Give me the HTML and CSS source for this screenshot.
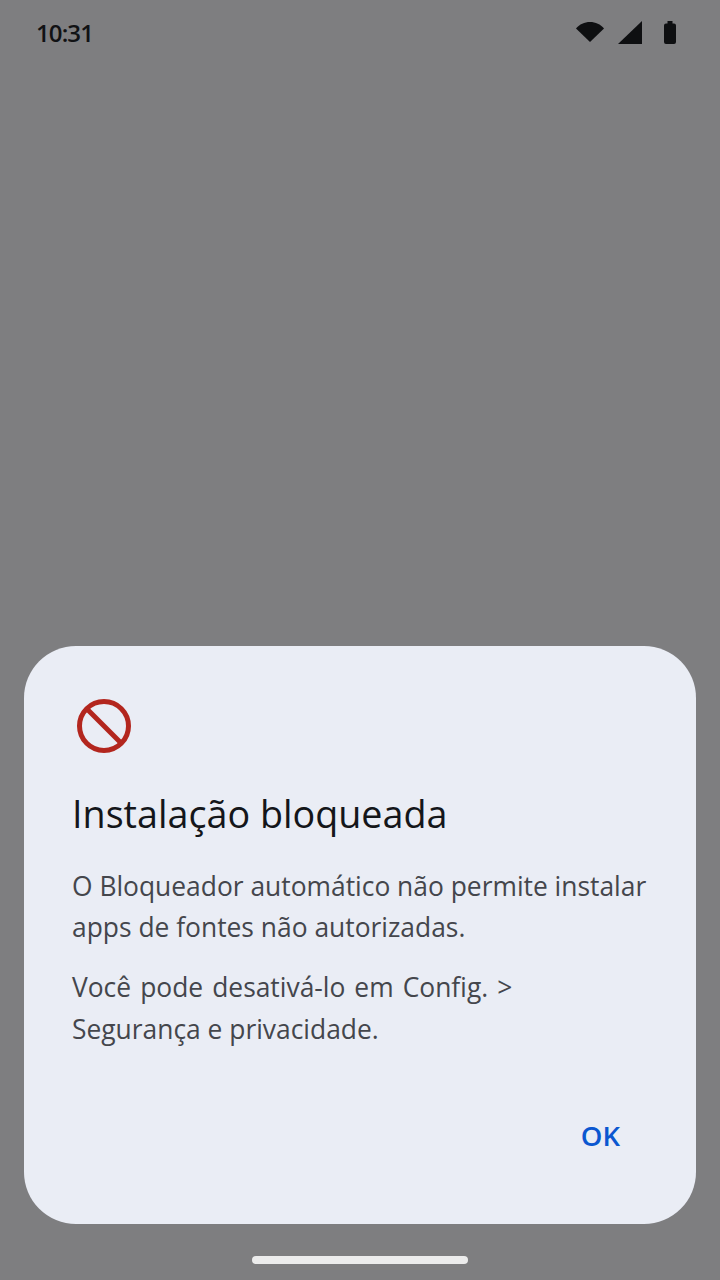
FILE: index.html
```html
<!DOCTYPE html>
<html lang="pt-BR">
<head>
    <meta charset="utf-8">
    <title>Instalação bloqueada</title>
    <link rel="stylesheet" href="styles.css">
</head>
<body>
    <header class="status-bar">
        <span class="clock">10:31</span>
        <div class="status-icons">
            <svg class="icon-wifi" width="28" height="20" viewBox="0 0 28 20">
                <path d="M0 6.500C3.500 2.200 8.500 0 14 0S24.500 2.200 28 6.500L14 20Z" fill="#0e0f11"/>
            </svg>
            <svg class="icon-signal" width="24" height="23" viewBox="0 0 24 23">
                <path d="M24 0V23H0Z" fill="#0e0f11"/>
            </svg>
            <svg class="icon-battery" width="12" height="23" viewBox="0 0 12 23">
                <path d="M3.500 0H8.500V2.500H10Q12 2.500 12 4.500V21Q12 23 10 23H2Q0 23 0 21V4.500Q0 2.500 2 2.500H3.500Z" fill="#0e0f11"/>
            </svg>
        </div>
    </header>

    <main class="screen">
        <section class="dialog">
            <svg class="dialog-icon" width="56" height="56" viewBox="0 0 56 56">
                <circle cx="28" cy="28" r="24.500" fill="none" stroke="#b3261e" stroke-width="5"/>
                <path d="M11 11L45 45" stroke="#b3261e" stroke-width="5"/>
            </svg>
            <h2 class="dialog-title">Instalação bloqueada</h2>
            <p class="dialog-text">O Bloqueador automático não permite instalar<br>apps de fontes não autorizadas.</p>
            <p class="dialog-text dialog-text-tall"><span class="wide-words">Você pode desativá-lo em Config. &gt;</span><br>Segurança e privacidade.</p>
            <div class="dialog-actions">
                <button class="ok-button">OK</button>
            </div>
        </section>
    </main>

    <footer class="nav-bar">
        <div class="home-pill"></div>
    </footer>
</body>
</html>
```

FILE: styles.css
```css
html, body {
    margin: 0;
    padding: 0;
}

body {
    width: 720px;
    height: 1280px;
    background-color: #7e7e80;
    font-family: "Open Sans", "Noto Sans", sans-serif;
    display: flex;
    flex-direction: column;
    overflow: hidden;
}

.status-bar {
    height: 64px;
    padding: 0 44px 0 36px;
    display: flex;
    align-items: center;
    justify-content: space-between;
}

.clock {
    font-size: 24px;
    font-weight: 600;
    color: #111214;
    letter-spacing: -0.9px;
}

.status-icons {
    display: flex;
    align-items: center;
    gap: 14px;
}

.icon-battery {
    margin-left: 8px;
}

.screen {
    flex: 1;
    display: flex;
    flex-direction: column;
    justify-content: flex-end;
    padding: 0 24px;
}

.dialog {
    background-color: #eaedf5;
    border-radius: 52px;
    padding: 52px 48px 0;
    height: 578px;
    box-sizing: border-box;
    display: flex;
    flex-direction: column;
}

.dialog-icon {
    display: block;
    margin-left: 4px;
}

.dialog-title {
    margin: 36px 0 0;
    font-size: 37.7px;
    line-height: 48px;
    font-weight: 400;
    color: #14161a;
}

.dialog-text {
    margin: 0;
    font-size: 26.4px;
    line-height: 41px;
    color: #44464c;
}

.dialog-title + .dialog-text {
    margin-top: 28px;
}

.dialog-text + .dialog-text {
    margin-top: 18px;
}

.dialog-text-tall {
    line-height: 42px;
}

.wide-words {
    word-spacing: 2.2px;
}

.dialog-actions {
    margin-top: 67px;
    display: flex;
    justify-content: flex-end;
}

.ok-button {
    background: none;
    border: none;
    padding: 0 28px 0 0;
    font-family: inherit;
    font-size: 27.5px;
    font-weight: 600;
    color: #0b57d0;
    cursor: pointer;
}

.nav-bar {
    height: 56px;
    display: flex;
    justify-content: center;
    padding-top: 32px;
    box-sizing: border-box;
}

.home-pill {
    width: 216px;
    height: 8px;
    border-radius: 4px;
    background-color: #ececec;
}
```
